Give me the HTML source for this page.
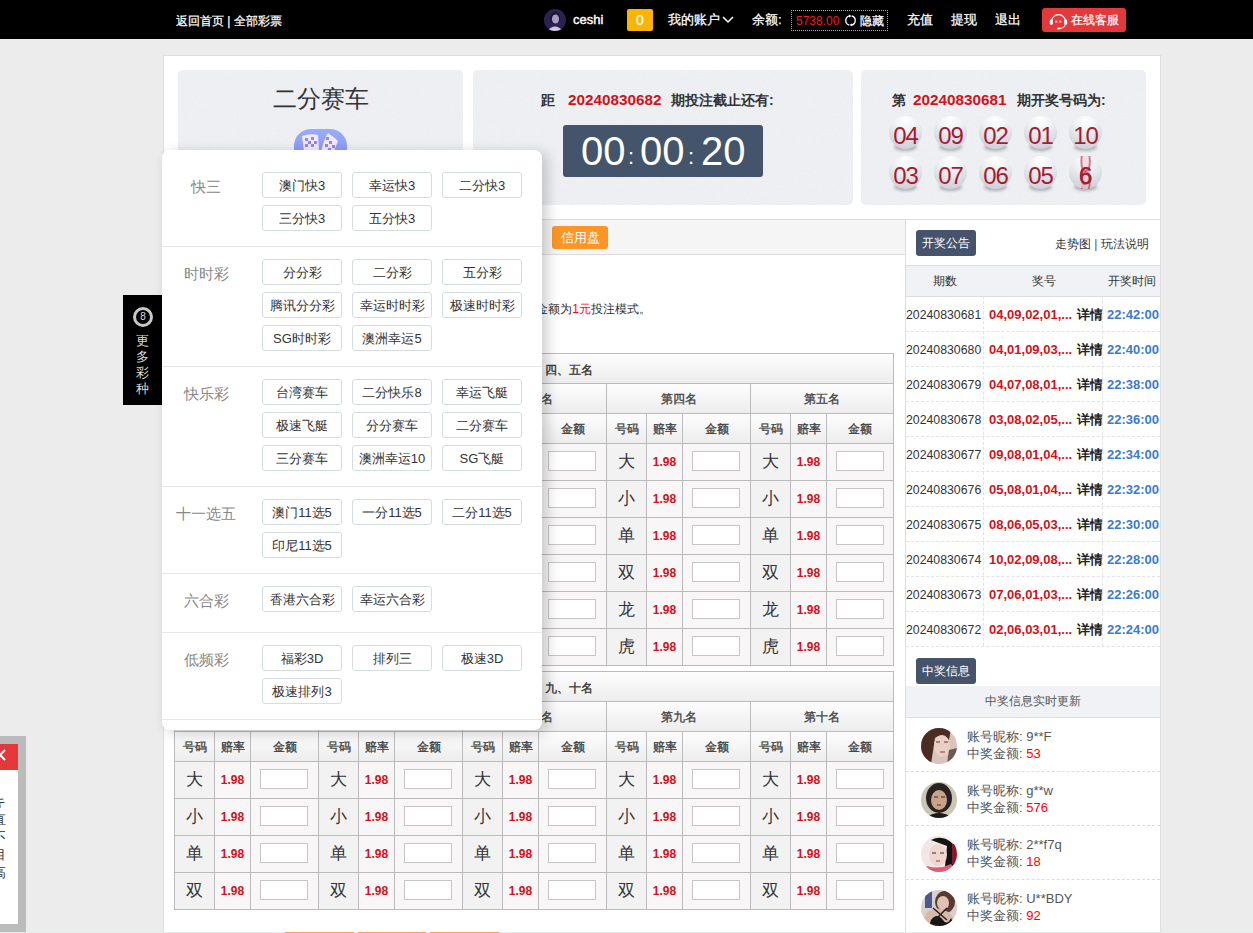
<!DOCTYPE html>
<html><head><meta charset="utf-8">
<style>
*{margin:0;padding:0;box-sizing:border-box}
html,body{width:1253px;height:933px;overflow:hidden}
body{background:#ececec;font-family:"Liberation Sans",sans-serif;font-size:13px;color:#333;position:relative}
.a{position:absolute;white-space:nowrap}
#top{position:absolute;left:0;top:0;width:1253px;height:39px;background:#000;color:#fff}
#top .a{top:11px;line-height:18px;font-size:13px;-webkit-text-stroke:0.25px #fff}
#main{position:absolute;left:163px;top:55px;width:998px;height:900px;background:#fff;border:1px solid #ddd}
.panel{position:absolute;top:70px;height:135px;background:#eceef2;border-radius:5px}
.ball{position:absolute;width:33px;height:33px;border-radius:50%;background:radial-gradient(circle at 50% 12%,#ffffff 0%,#eff0f3 35%,#d6d9e0 70%,#c9ccd5 100%);color:#a31c31;font-size:24px;line-height:40px;text-align:center;letter-spacing:-1px}
.th{background:linear-gradient(#fdfdfd,#ededed)}
.btn{position:absolute;width:80px;height:26px;border:1px solid #d5dede;border-radius:3px;text-align:center;line-height:26px;font-size:13px;color:#333;white-space:nowrap}
</style></head><body>
<div id="top">
  <div class="a" style="left:176px;top:12px;font-size:12px">返回首页 | 全部彩票</div>
  <svg class="a" style="left:544px;top:9px" width="22" height="22" viewBox="0 0 22 22"><defs><clipPath id="tav"><circle cx="11" cy="11" r="11"/></clipPath></defs><g clip-path="url(#tav)"><rect width="22" height="22" fill="#2a2350"/><ellipse cx="11" cy="9" rx="5" ry="6" fill="#1a1530"/><ellipse cx="11.5" cy="10" rx="3.6" ry="4.6" fill="#a89cc0"/><path d="M3 22 Q11 13 19 22Z" fill="#cfc6dc"/></g></svg>
  <div class="a" style="left:573px;font-size:13px;-webkit-text-stroke:0.4px #fff">ceshi</div>
  <div class="a" style="left:627px;top:9px;width:26px;height:22px;background:#fbb400;border-radius:2px;text-align:center;line-height:22px;font-size:14px">0</div>
  <div class="a" style="left:668px">我的账户</div>
  <svg class="a" style="left:722px;top:15px" width="12" height="9" viewBox="0 0 12 9"><path d="M1 2 L6 7 L11 2" stroke="#fff" stroke-width="1.5" fill="none"/></svg>
  <div class="a" style="left:752px">余额:</div>
  <div class="a" style="left:791px;top:10px;width:97px;height:21px;border:1px dotted #aaa"></div>
  <div class="a" style="left:796px;top:12px;font-size:12px;color:#f21b1b;-webkit-text-stroke:0">5738.00</div>
  <svg class="a" style="left:844px;top:14px" width="13" height="13" viewBox="0 0 13 13"><path d="M6 1.8 A4.7 4.7 0 0 0 5.2 11" stroke="#fff" stroke-width="1.3" fill="none"/><path d="M7 11.2 A4.7 4.7 0 0 0 7.8 2" stroke="#fff" stroke-width="1.3" fill="none"/><path d="M4.8 0.6 L7.6 1.9 L5.2 3.6Z" fill="#fff"/><path d="M8.2 12.4 L5.4 11.1 L7.8 9.4Z" fill="#fff"/></svg>
  <div class="a" style="left:860px;top:12px;font-size:12px">隐藏</div>
  <div class="a" style="left:907px;font-size:12.5px">充值</div>
  <div class="a" style="left:951px;font-size:12.5px">提现</div>
  <div class="a" style="left:995px;font-size:12.5px">退出</div>
  <div class="a" style="left:1042px;top:8px;width:84px;height:24px;background:#e4393c;border-radius:3px"></div>
  <svg class="a" style="left:1049px;top:11px" width="19" height="19" viewBox="0 0 19 19"><path d="M2.6 10.5 A6.9 6.9 0 0 1 16.4 10.5" stroke="#fff" stroke-width="1.2" fill="none"/><rect x="0.8" y="8.6" width="3" height="5.4" rx="1.4" fill="#fff"/><rect x="15.2" y="8.6" width="3" height="5.4" rx="1.4" fill="#fff"/><rect x="6.3" y="9.6" width="2" height="2" fill="#f6c9ca"/><rect x="10.3" y="9.6" width="2" height="2" fill="#f6c9ca"/><path d="M16.2 13.5 Q15.5 17.2 10.5 17.4" stroke="#fff" stroke-width="1.1" fill="none"/><ellipse cx="9.6" cy="17.4" rx="1.6" ry="1" fill="#fff"/></svg>
  <div class="a" style="left:1071px;font-size:12px;top:11px">在线客服</div>
</div>
<div id="main"></div>
<div class="panel" style="left:178px;width:285px"><svg width="285" height="135" style="position:absolute;left:0;top:0;border-radius:5px"><filter id="nz0"><feTurbulence type="fractalNoise" baseFrequency="0.9" numOctaves="1" seed="3"/><feColorMatrix values="0 0 0 0 0.92  0 0 0 0 0.93  0 0 0 0 0.96  0 0 0 1.6 -0.75"/></filter><rect width="285" height="135" rx="5" filter="url(#nz0)"/></svg></div>
<div class="a" style="left:178px;top:83px;width:285px;text-align:center;font-size:24px;line-height:32px;color:#333">二分赛车</div>
<div class="a" style="left:294px;top:129px;width:53px;height:50px;border-radius:17px;background:linear-gradient(#97aefc,#7f7cf2);overflow:hidden"><svg width="53" height="50" viewBox="0 0 53 50"><path d="M8 7 Q16 4 24 6 L25 22 Q17 20 10 23 Z" fill="#f6e8f8"/><path d="M27 22 Q31 8 34 4 Q40 8 44 12 Q41 20 38 26 Q33 22 27 22Z" fill="#f6e8f8"/><g fill="#8a8cf0"><rect x="11" y="9" width="3" height="3"/><rect x="17" y="8" width="3" height="3"/><rect x="14" y="12" width="3" height="3"/><rect x="20" y="12" width="3" height="3"/><rect x="11" y="15" width="3" height="3"/><rect x="17" y="15" width="3" height="3"/><rect x="32" y="8" width="3" height="3"/><rect x="35" y="12" width="3" height="3"/><rect x="31" y="15" width="3" height="3"/><rect x="38" y="16" width="3" height="3"/><rect x="34" y="19" width="3" height="3"/></g></svg></div>
<div class="panel" style="left:473px;width:380px"><svg width="380" height="135" style="position:absolute;left:0;top:0;border-radius:5px"><filter id="nz1"><feTurbulence type="fractalNoise" baseFrequency="0.9" numOctaves="1" seed="4"/><feColorMatrix values="0 0 0 0 0.92  0 0 0 0 0.93  0 0 0 0 0.96  0 0 0 1.6 -0.75"/></filter><rect width="380" height="135" rx="5" filter="url(#nz1)"/></svg></div>
<div class="a" style="left:541px;top:90px;font-size:14px;font-weight:bold;line-height:20px">距</div>
<div class="a" style="left:568px;top:90px;font-size:15.3px;font-weight:bold;line-height:20px;color:#d0121b">20240830682</div>
<div class="a" style="left:671px;top:90px;font-size:14px;font-weight:bold;line-height:20px">期投注截止还有:</div>
<div class="a" style="left:563px;top:125px;width:200px;height:52px;background:#44546a;border-radius:3px;color:#fff;font-size:40px;line-height:52px">
  <span class="a" style="left:18px;top:0">00</span><span class="a" style="left:65px;top:6px;font-size:22px">:</span>
  <span class="a" style="left:77px;top:0">00</span><span class="a" style="left:125px;top:6px;font-size:22px">:</span>
  <span class="a" style="left:138px;top:0">20</span>
</div>
<div class="panel" style="left:861px;width:285px"><svg width="285" height="135" style="position:absolute;left:0;top:0;border-radius:5px"><filter id="nz2"><feTurbulence type="fractalNoise" baseFrequency="0.9" numOctaves="1" seed="5"/><feColorMatrix values="0 0 0 0 0.92  0 0 0 0 0.93  0 0 0 0 0.96  0 0 0 1.6 -0.75"/></filter><rect width="285" height="135" rx="5" filter="url(#nz2)"/></svg></div>
<div class="a" style="left:892px;top:90px;font-size:14px;font-weight:bold;line-height:20px">第</div>
<div class="a" style="left:913px;top:90px;font-size:15.3px;font-weight:bold;line-height:20px;color:#d0121b">20240830681</div>
<div class="a" style="left:1017px;top:90px;font-size:14px;font-weight:bold;line-height:20px">期开奖号码为:</div>
<div class="a" style="left:894px;top:143px;width:23px;height:8px;border-radius:50%;background:rgba(60,60,70,.35);filter:blur(1.5px)"></div>
<div class="ball" style="left:889px;top:116px">04</div>
<div class="a" style="left:939px;top:143px;width:23px;height:8px;border-radius:50%;background:rgba(60,60,70,.35);filter:blur(1.5px)"></div>
<div class="ball" style="left:934px;top:116px">09</div>
<div class="a" style="left:984px;top:143px;width:23px;height:8px;border-radius:50%;background:rgba(60,60,70,.35);filter:blur(1.5px)"></div>
<div class="ball" style="left:979px;top:116px">02</div>
<div class="a" style="left:1029px;top:143px;width:23px;height:8px;border-radius:50%;background:rgba(60,60,70,.35);filter:blur(1.5px)"></div>
<div class="ball" style="left:1024px;top:116px">01</div>
<div class="a" style="left:1074px;top:143px;width:23px;height:8px;border-radius:50%;background:rgba(60,60,70,.35);filter:blur(1.5px)"></div>
<div class="ball" style="left:1069px;top:116px">10</div>
<div class="a" style="left:894px;top:183px;width:23px;height:8px;border-radius:50%;background:rgba(60,60,70,.35);filter:blur(1.5px)"></div>
<div class="ball" style="left:889px;top:156px">03</div>
<div class="a" style="left:939px;top:183px;width:23px;height:8px;border-radius:50%;background:rgba(60,60,70,.35);filter:blur(1.5px)"></div>
<div class="ball" style="left:934px;top:156px">07</div>
<div class="a" style="left:984px;top:183px;width:23px;height:8px;border-radius:50%;background:rgba(60,60,70,.35);filter:blur(1.5px)"></div>
<div class="ball" style="left:979px;top:156px">06</div>
<div class="a" style="left:1029px;top:183px;width:23px;height:8px;border-radius:50%;background:rgba(60,60,70,.35);filter:blur(1.5px)"></div>
<div class="ball" style="left:1024px;top:156px">05</div>
<div class="a" style="left:1074px;top:183px;width:23px;height:8px;border-radius:50%;background:rgba(60,60,70,.35);filter:blur(1.5px)"></div>
<div class="ball" style="left:1069px;top:156px">6</div>
<div class="a" style="left:1079px;top:156px;width:13px;height:33px;overflow:hidden;background:linear-gradient(90deg,transparent 2px,rgba(225,150,165,.3) 2px 11px,transparent 11px)"><div style="position:absolute;left:0;top:-14px;width:13px;color:rgba(190,30,50,.55);font-size:22px;line-height:15px;text-align:center;transform:scaleY(1.4);filter:blur(0.5px);white-space:normal">8<br>0<br>9<br>6</div></div>
<div class="a" style="left:1069px;top:156px;width:33px;color:#a31c31;font-size:24px;line-height:40px;text-align:center">6</div>
<div class="a" style="left:164px;top:219px;width:741px;height:36px;background:#f5f5f5;border-top:1px solid #ddd;border-bottom:1px solid #ddd"></div>
<div class="a" style="left:552px;top:226px;width:56px;height:23px;background:#fb9526;border-radius:3px;color:#fff;font-size:13px;line-height:23px;text-align:center">信用盘</div>
<div class="a" style="left:905px;top:219px;width:255px;height:714px;border-left:1px solid #ddd;border-top:1px solid #ddd;background:#fff"></div>
<div class="a" style="left:300px;top:300px;font-size:12px;line-height:18px;width:351px;text-align:right">单注最低金额为<span style="color:#f00">1元</span>投注模式。</div>
<div class="a" style="left:174px;top:353px;width:720px;height:312px">
<div class="a th" style="left:0;top:0;width:720px;height:31px;border:1px solid #bbb"></div>
<div class="a" style="left:171px;top:9px;width:200px;text-align:right;-webkit-text-stroke:0.35px #333;line-height:16px;font-size:12px">第一、二、三、</div>
<div class="a" style="left:371px;top:9px;-webkit-text-stroke:0.35px #333;line-height:16px;font-size:12px">四、五名</div>
<div class="a th" style="left:0px;top:30px;width:145px;height:31px;border:1px solid #bbb;text-align:center;line-height:30px;font-size:12px;-webkit-text-stroke:0.35px #444;color:#444">第一名</div>
<div class="a th" style="left:0px;top:60px;width:41px;height:31px;border:1px solid #bbb;text-align:center;line-height:31px;font-size:12px;-webkit-text-stroke:0.35px #444;color:#444">号码</div>
<div class="a th" style="left:40px;top:60px;width:37px;height:31px;border:1px solid #bbb;text-align:center;line-height:31px;font-size:12px;-webkit-text-stroke:0.35px #444;color:#444">赔率</div>
<div class="a th" style="left:76px;top:60px;width:69px;height:31px;border:1px solid #bbb;text-align:center;line-height:31px;font-size:12px;-webkit-text-stroke:0.35px #444;color:#444">金额</div>
<div class="a" style="left:0px;top:90px;width:41px;height:38px;border:1px solid #bbb;background:#f2f2f2;text-align:center;line-height:36px;font-size:17px">大</div>
<div class="a" style="left:40px;top:90px;width:37px;height:38px;border:1px solid #bbb;background:#f8f6f6;text-align:center;line-height:36px;font-size:12px;font-weight:bold;color:#d0121b">1.98</div>
<div class="a" style="left:76px;top:90px;width:69px;height:38px;border:1px solid #bbb;background:#f8f6f6"></div>
<div class="a" style="left:86px;top:98px;width:48px;height:20px;border:1px solid #c6c6c6;background:#fff"></div>
<div class="a" style="left:0px;top:127px;width:41px;height:38px;border:1px solid #bbb;background:#f2f2f2;text-align:center;line-height:36px;font-size:17px">小</div>
<div class="a" style="left:40px;top:127px;width:37px;height:38px;border:1px solid #bbb;background:#f8f6f6;text-align:center;line-height:36px;font-size:12px;font-weight:bold;color:#d0121b">1.98</div>
<div class="a" style="left:76px;top:127px;width:69px;height:38px;border:1px solid #bbb;background:#f8f6f6"></div>
<div class="a" style="left:86px;top:135px;width:48px;height:20px;border:1px solid #c6c6c6;background:#fff"></div>
<div class="a" style="left:0px;top:164px;width:41px;height:38px;border:1px solid #bbb;background:#f2f2f2;text-align:center;line-height:36px;font-size:17px">单</div>
<div class="a" style="left:40px;top:164px;width:37px;height:38px;border:1px solid #bbb;background:#f8f6f6;text-align:center;line-height:36px;font-size:12px;font-weight:bold;color:#d0121b">1.98</div>
<div class="a" style="left:76px;top:164px;width:69px;height:38px;border:1px solid #bbb;background:#f8f6f6"></div>
<div class="a" style="left:86px;top:172px;width:48px;height:20px;border:1px solid #c6c6c6;background:#fff"></div>
<div class="a" style="left:0px;top:201px;width:41px;height:38px;border:1px solid #bbb;background:#f2f2f2;text-align:center;line-height:36px;font-size:17px">双</div>
<div class="a" style="left:40px;top:201px;width:37px;height:38px;border:1px solid #bbb;background:#f8f6f6;text-align:center;line-height:36px;font-size:12px;font-weight:bold;color:#d0121b">1.98</div>
<div class="a" style="left:76px;top:201px;width:69px;height:38px;border:1px solid #bbb;background:#f8f6f6"></div>
<div class="a" style="left:86px;top:209px;width:48px;height:20px;border:1px solid #c6c6c6;background:#fff"></div>
<div class="a" style="left:0px;top:238px;width:41px;height:38px;border:1px solid #bbb;background:#f2f2f2;text-align:center;line-height:36px;font-size:17px">龙</div>
<div class="a" style="left:40px;top:238px;width:37px;height:38px;border:1px solid #bbb;background:#f8f6f6;text-align:center;line-height:36px;font-size:12px;font-weight:bold;color:#d0121b">1.98</div>
<div class="a" style="left:76px;top:238px;width:69px;height:38px;border:1px solid #bbb;background:#f8f6f6"></div>
<div class="a" style="left:86px;top:246px;width:48px;height:20px;border:1px solid #c6c6c6;background:#fff"></div>
<div class="a" style="left:0px;top:275px;width:41px;height:38px;border:1px solid #bbb;background:#f2f2f2;text-align:center;line-height:36px;font-size:17px">虎</div>
<div class="a" style="left:40px;top:275px;width:37px;height:38px;border:1px solid #bbb;background:#f8f6f6;text-align:center;line-height:36px;font-size:12px;font-weight:bold;color:#d0121b">1.98</div>
<div class="a" style="left:76px;top:275px;width:69px;height:38px;border:1px solid #bbb;background:#f8f6f6"></div>
<div class="a" style="left:86px;top:283px;width:48px;height:20px;border:1px solid #c6c6c6;background:#fff"></div>
<div class="a th" style="left:144px;top:30px;width:145px;height:31px;border:1px solid #bbb;text-align:center;line-height:30px;font-size:12px;-webkit-text-stroke:0.35px #444;color:#444">第二名</div>
<div class="a th" style="left:144px;top:60px;width:41px;height:31px;border:1px solid #bbb;text-align:center;line-height:31px;font-size:12px;-webkit-text-stroke:0.35px #444;color:#444">号码</div>
<div class="a th" style="left:184px;top:60px;width:37px;height:31px;border:1px solid #bbb;text-align:center;line-height:31px;font-size:12px;-webkit-text-stroke:0.35px #444;color:#444">赔率</div>
<div class="a th" style="left:220px;top:60px;width:69px;height:31px;border:1px solid #bbb;text-align:center;line-height:31px;font-size:12px;-webkit-text-stroke:0.35px #444;color:#444">金额</div>
<div class="a" style="left:144px;top:90px;width:41px;height:38px;border:1px solid #bbb;background:#f2f2f2;text-align:center;line-height:36px;font-size:17px">大</div>
<div class="a" style="left:184px;top:90px;width:37px;height:38px;border:1px solid #bbb;background:#f8f6f6;text-align:center;line-height:36px;font-size:12px;font-weight:bold;color:#d0121b">1.98</div>
<div class="a" style="left:220px;top:90px;width:69px;height:38px;border:1px solid #bbb;background:#f8f6f6"></div>
<div class="a" style="left:230px;top:98px;width:48px;height:20px;border:1px solid #c6c6c6;background:#fff"></div>
<div class="a" style="left:144px;top:127px;width:41px;height:38px;border:1px solid #bbb;background:#f2f2f2;text-align:center;line-height:36px;font-size:17px">小</div>
<div class="a" style="left:184px;top:127px;width:37px;height:38px;border:1px solid #bbb;background:#f8f6f6;text-align:center;line-height:36px;font-size:12px;font-weight:bold;color:#d0121b">1.98</div>
<div class="a" style="left:220px;top:127px;width:69px;height:38px;border:1px solid #bbb;background:#f8f6f6"></div>
<div class="a" style="left:230px;top:135px;width:48px;height:20px;border:1px solid #c6c6c6;background:#fff"></div>
<div class="a" style="left:144px;top:164px;width:41px;height:38px;border:1px solid #bbb;background:#f2f2f2;text-align:center;line-height:36px;font-size:17px">单</div>
<div class="a" style="left:184px;top:164px;width:37px;height:38px;border:1px solid #bbb;background:#f8f6f6;text-align:center;line-height:36px;font-size:12px;font-weight:bold;color:#d0121b">1.98</div>
<div class="a" style="left:220px;top:164px;width:69px;height:38px;border:1px solid #bbb;background:#f8f6f6"></div>
<div class="a" style="left:230px;top:172px;width:48px;height:20px;border:1px solid #c6c6c6;background:#fff"></div>
<div class="a" style="left:144px;top:201px;width:41px;height:38px;border:1px solid #bbb;background:#f2f2f2;text-align:center;line-height:36px;font-size:17px">双</div>
<div class="a" style="left:184px;top:201px;width:37px;height:38px;border:1px solid #bbb;background:#f8f6f6;text-align:center;line-height:36px;font-size:12px;font-weight:bold;color:#d0121b">1.98</div>
<div class="a" style="left:220px;top:201px;width:69px;height:38px;border:1px solid #bbb;background:#f8f6f6"></div>
<div class="a" style="left:230px;top:209px;width:48px;height:20px;border:1px solid #c6c6c6;background:#fff"></div>
<div class="a" style="left:144px;top:238px;width:41px;height:38px;border:1px solid #bbb;background:#f2f2f2;text-align:center;line-height:36px;font-size:17px">龙</div>
<div class="a" style="left:184px;top:238px;width:37px;height:38px;border:1px solid #bbb;background:#f8f6f6;text-align:center;line-height:36px;font-size:12px;font-weight:bold;color:#d0121b">1.98</div>
<div class="a" style="left:220px;top:238px;width:69px;height:38px;border:1px solid #bbb;background:#f8f6f6"></div>
<div class="a" style="left:230px;top:246px;width:48px;height:20px;border:1px solid #c6c6c6;background:#fff"></div>
<div class="a" style="left:144px;top:275px;width:41px;height:38px;border:1px solid #bbb;background:#f2f2f2;text-align:center;line-height:36px;font-size:17px">虎</div>
<div class="a" style="left:184px;top:275px;width:37px;height:38px;border:1px solid #bbb;background:#f8f6f6;text-align:center;line-height:36px;font-size:12px;font-weight:bold;color:#d0121b">1.98</div>
<div class="a" style="left:220px;top:275px;width:69px;height:38px;border:1px solid #bbb;background:#f8f6f6"></div>
<div class="a" style="left:230px;top:283px;width:48px;height:20px;border:1px solid #c6c6c6;background:#fff"></div>
<div class="a th" style="left:288px;top:30px;width:145px;height:31px;border:1px solid #bbb;text-align:center;line-height:30px;font-size:12px;-webkit-text-stroke:0.35px #444;color:#444">第三名</div>
<div class="a th" style="left:288px;top:60px;width:41px;height:31px;border:1px solid #bbb;text-align:center;line-height:31px;font-size:12px;-webkit-text-stroke:0.35px #444;color:#444">号码</div>
<div class="a th" style="left:328px;top:60px;width:37px;height:31px;border:1px solid #bbb;text-align:center;line-height:31px;font-size:12px;-webkit-text-stroke:0.35px #444;color:#444">赔率</div>
<div class="a th" style="left:364px;top:60px;width:69px;height:31px;border:1px solid #bbb;text-align:center;line-height:31px;font-size:12px;-webkit-text-stroke:0.35px #444;color:#444">金额</div>
<div class="a" style="left:288px;top:90px;width:41px;height:38px;border:1px solid #bbb;background:#f2f2f2;text-align:center;line-height:36px;font-size:17px">大</div>
<div class="a" style="left:328px;top:90px;width:37px;height:38px;border:1px solid #bbb;background:#f8f6f6;text-align:center;line-height:36px;font-size:12px;font-weight:bold;color:#d0121b">1.98</div>
<div class="a" style="left:364px;top:90px;width:69px;height:38px;border:1px solid #bbb;background:#f8f6f6"></div>
<div class="a" style="left:374px;top:98px;width:48px;height:20px;border:1px solid #c6c6c6;background:#fff"></div>
<div class="a" style="left:288px;top:127px;width:41px;height:38px;border:1px solid #bbb;background:#f2f2f2;text-align:center;line-height:36px;font-size:17px">小</div>
<div class="a" style="left:328px;top:127px;width:37px;height:38px;border:1px solid #bbb;background:#f8f6f6;text-align:center;line-height:36px;font-size:12px;font-weight:bold;color:#d0121b">1.98</div>
<div class="a" style="left:364px;top:127px;width:69px;height:38px;border:1px solid #bbb;background:#f8f6f6"></div>
<div class="a" style="left:374px;top:135px;width:48px;height:20px;border:1px solid #c6c6c6;background:#fff"></div>
<div class="a" style="left:288px;top:164px;width:41px;height:38px;border:1px solid #bbb;background:#f2f2f2;text-align:center;line-height:36px;font-size:17px">单</div>
<div class="a" style="left:328px;top:164px;width:37px;height:38px;border:1px solid #bbb;background:#f8f6f6;text-align:center;line-height:36px;font-size:12px;font-weight:bold;color:#d0121b">1.98</div>
<div class="a" style="left:364px;top:164px;width:69px;height:38px;border:1px solid #bbb;background:#f8f6f6"></div>
<div class="a" style="left:374px;top:172px;width:48px;height:20px;border:1px solid #c6c6c6;background:#fff"></div>
<div class="a" style="left:288px;top:201px;width:41px;height:38px;border:1px solid #bbb;background:#f2f2f2;text-align:center;line-height:36px;font-size:17px">双</div>
<div class="a" style="left:328px;top:201px;width:37px;height:38px;border:1px solid #bbb;background:#f8f6f6;text-align:center;line-height:36px;font-size:12px;font-weight:bold;color:#d0121b">1.98</div>
<div class="a" style="left:364px;top:201px;width:69px;height:38px;border:1px solid #bbb;background:#f8f6f6"></div>
<div class="a" style="left:374px;top:209px;width:48px;height:20px;border:1px solid #c6c6c6;background:#fff"></div>
<div class="a" style="left:288px;top:238px;width:41px;height:38px;border:1px solid #bbb;background:#f2f2f2;text-align:center;line-height:36px;font-size:17px">龙</div>
<div class="a" style="left:328px;top:238px;width:37px;height:38px;border:1px solid #bbb;background:#f8f6f6;text-align:center;line-height:36px;font-size:12px;font-weight:bold;color:#d0121b">1.98</div>
<div class="a" style="left:364px;top:238px;width:69px;height:38px;border:1px solid #bbb;background:#f8f6f6"></div>
<div class="a" style="left:374px;top:246px;width:48px;height:20px;border:1px solid #c6c6c6;background:#fff"></div>
<div class="a" style="left:288px;top:275px;width:41px;height:38px;border:1px solid #bbb;background:#f2f2f2;text-align:center;line-height:36px;font-size:17px">虎</div>
<div class="a" style="left:328px;top:275px;width:37px;height:38px;border:1px solid #bbb;background:#f8f6f6;text-align:center;line-height:36px;font-size:12px;font-weight:bold;color:#d0121b">1.98</div>
<div class="a" style="left:364px;top:275px;width:69px;height:38px;border:1px solid #bbb;background:#f8f6f6"></div>
<div class="a" style="left:374px;top:283px;width:48px;height:20px;border:1px solid #c6c6c6;background:#fff"></div>
<div class="a th" style="left:432px;top:30px;width:145px;height:31px;border:1px solid #bbb;text-align:center;line-height:30px;font-size:12px;-webkit-text-stroke:0.35px #444;color:#444">第四名</div>
<div class="a th" style="left:432px;top:60px;width:41px;height:31px;border:1px solid #bbb;text-align:center;line-height:31px;font-size:12px;-webkit-text-stroke:0.35px #444;color:#444">号码</div>
<div class="a th" style="left:472px;top:60px;width:37px;height:31px;border:1px solid #bbb;text-align:center;line-height:31px;font-size:12px;-webkit-text-stroke:0.35px #444;color:#444">赔率</div>
<div class="a th" style="left:508px;top:60px;width:69px;height:31px;border:1px solid #bbb;text-align:center;line-height:31px;font-size:12px;-webkit-text-stroke:0.35px #444;color:#444">金额</div>
<div class="a" style="left:432px;top:90px;width:41px;height:38px;border:1px solid #bbb;background:#f2f2f2;text-align:center;line-height:36px;font-size:17px">大</div>
<div class="a" style="left:472px;top:90px;width:37px;height:38px;border:1px solid #bbb;background:#f8f6f6;text-align:center;line-height:36px;font-size:12px;font-weight:bold;color:#d0121b">1.98</div>
<div class="a" style="left:508px;top:90px;width:69px;height:38px;border:1px solid #bbb;background:#f8f6f6"></div>
<div class="a" style="left:518px;top:98px;width:48px;height:20px;border:1px solid #c6c6c6;background:#fff"></div>
<div class="a" style="left:432px;top:127px;width:41px;height:38px;border:1px solid #bbb;background:#f2f2f2;text-align:center;line-height:36px;font-size:17px">小</div>
<div class="a" style="left:472px;top:127px;width:37px;height:38px;border:1px solid #bbb;background:#f8f6f6;text-align:center;line-height:36px;font-size:12px;font-weight:bold;color:#d0121b">1.98</div>
<div class="a" style="left:508px;top:127px;width:69px;height:38px;border:1px solid #bbb;background:#f8f6f6"></div>
<div class="a" style="left:518px;top:135px;width:48px;height:20px;border:1px solid #c6c6c6;background:#fff"></div>
<div class="a" style="left:432px;top:164px;width:41px;height:38px;border:1px solid #bbb;background:#f2f2f2;text-align:center;line-height:36px;font-size:17px">单</div>
<div class="a" style="left:472px;top:164px;width:37px;height:38px;border:1px solid #bbb;background:#f8f6f6;text-align:center;line-height:36px;font-size:12px;font-weight:bold;color:#d0121b">1.98</div>
<div class="a" style="left:508px;top:164px;width:69px;height:38px;border:1px solid #bbb;background:#f8f6f6"></div>
<div class="a" style="left:518px;top:172px;width:48px;height:20px;border:1px solid #c6c6c6;background:#fff"></div>
<div class="a" style="left:432px;top:201px;width:41px;height:38px;border:1px solid #bbb;background:#f2f2f2;text-align:center;line-height:36px;font-size:17px">双</div>
<div class="a" style="left:472px;top:201px;width:37px;height:38px;border:1px solid #bbb;background:#f8f6f6;text-align:center;line-height:36px;font-size:12px;font-weight:bold;color:#d0121b">1.98</div>
<div class="a" style="left:508px;top:201px;width:69px;height:38px;border:1px solid #bbb;background:#f8f6f6"></div>
<div class="a" style="left:518px;top:209px;width:48px;height:20px;border:1px solid #c6c6c6;background:#fff"></div>
<div class="a" style="left:432px;top:238px;width:41px;height:38px;border:1px solid #bbb;background:#f2f2f2;text-align:center;line-height:36px;font-size:17px">龙</div>
<div class="a" style="left:472px;top:238px;width:37px;height:38px;border:1px solid #bbb;background:#f8f6f6;text-align:center;line-height:36px;font-size:12px;font-weight:bold;color:#d0121b">1.98</div>
<div class="a" style="left:508px;top:238px;width:69px;height:38px;border:1px solid #bbb;background:#f8f6f6"></div>
<div class="a" style="left:518px;top:246px;width:48px;height:20px;border:1px solid #c6c6c6;background:#fff"></div>
<div class="a" style="left:432px;top:275px;width:41px;height:38px;border:1px solid #bbb;background:#f2f2f2;text-align:center;line-height:36px;font-size:17px">虎</div>
<div class="a" style="left:472px;top:275px;width:37px;height:38px;border:1px solid #bbb;background:#f8f6f6;text-align:center;line-height:36px;font-size:12px;font-weight:bold;color:#d0121b">1.98</div>
<div class="a" style="left:508px;top:275px;width:69px;height:38px;border:1px solid #bbb;background:#f8f6f6"></div>
<div class="a" style="left:518px;top:283px;width:48px;height:20px;border:1px solid #c6c6c6;background:#fff"></div>
<div class="a th" style="left:576px;top:30px;width:144px;height:31px;border:1px solid #bbb;text-align:center;line-height:30px;font-size:12px;-webkit-text-stroke:0.35px #444;color:#444">第五名</div>
<div class="a th" style="left:576px;top:60px;width:41px;height:31px;border:1px solid #bbb;text-align:center;line-height:31px;font-size:12px;-webkit-text-stroke:0.35px #444;color:#444">号码</div>
<div class="a th" style="left:616px;top:60px;width:37px;height:31px;border:1px solid #bbb;text-align:center;line-height:31px;font-size:12px;-webkit-text-stroke:0.35px #444;color:#444">赔率</div>
<div class="a th" style="left:652px;top:60px;width:68px;height:31px;border:1px solid #bbb;text-align:center;line-height:31px;font-size:12px;-webkit-text-stroke:0.35px #444;color:#444">金额</div>
<div class="a" style="left:576px;top:90px;width:41px;height:38px;border:1px solid #bbb;background:#f2f2f2;text-align:center;line-height:36px;font-size:17px">大</div>
<div class="a" style="left:616px;top:90px;width:37px;height:38px;border:1px solid #bbb;background:#f8f6f6;text-align:center;line-height:36px;font-size:12px;font-weight:bold;color:#d0121b">1.98</div>
<div class="a" style="left:652px;top:90px;width:68px;height:38px;border:1px solid #bbb;background:#f8f6f6"></div>
<div class="a" style="left:662px;top:98px;width:48px;height:20px;border:1px solid #c6c6c6;background:#fff"></div>
<div class="a" style="left:576px;top:127px;width:41px;height:38px;border:1px solid #bbb;background:#f2f2f2;text-align:center;line-height:36px;font-size:17px">小</div>
<div class="a" style="left:616px;top:127px;width:37px;height:38px;border:1px solid #bbb;background:#f8f6f6;text-align:center;line-height:36px;font-size:12px;font-weight:bold;color:#d0121b">1.98</div>
<div class="a" style="left:652px;top:127px;width:68px;height:38px;border:1px solid #bbb;background:#f8f6f6"></div>
<div class="a" style="left:662px;top:135px;width:48px;height:20px;border:1px solid #c6c6c6;background:#fff"></div>
<div class="a" style="left:576px;top:164px;width:41px;height:38px;border:1px solid #bbb;background:#f2f2f2;text-align:center;line-height:36px;font-size:17px">单</div>
<div class="a" style="left:616px;top:164px;width:37px;height:38px;border:1px solid #bbb;background:#f8f6f6;text-align:center;line-height:36px;font-size:12px;font-weight:bold;color:#d0121b">1.98</div>
<div class="a" style="left:652px;top:164px;width:68px;height:38px;border:1px solid #bbb;background:#f8f6f6"></div>
<div class="a" style="left:662px;top:172px;width:48px;height:20px;border:1px solid #c6c6c6;background:#fff"></div>
<div class="a" style="left:576px;top:201px;width:41px;height:38px;border:1px solid #bbb;background:#f2f2f2;text-align:center;line-height:36px;font-size:17px">双</div>
<div class="a" style="left:616px;top:201px;width:37px;height:38px;border:1px solid #bbb;background:#f8f6f6;text-align:center;line-height:36px;font-size:12px;font-weight:bold;color:#d0121b">1.98</div>
<div class="a" style="left:652px;top:201px;width:68px;height:38px;border:1px solid #bbb;background:#f8f6f6"></div>
<div class="a" style="left:662px;top:209px;width:48px;height:20px;border:1px solid #c6c6c6;background:#fff"></div>
<div class="a" style="left:576px;top:238px;width:41px;height:38px;border:1px solid #bbb;background:#f2f2f2;text-align:center;line-height:36px;font-size:17px">龙</div>
<div class="a" style="left:616px;top:238px;width:37px;height:38px;border:1px solid #bbb;background:#f8f6f6;text-align:center;line-height:36px;font-size:12px;font-weight:bold;color:#d0121b">1.98</div>
<div class="a" style="left:652px;top:238px;width:68px;height:38px;border:1px solid #bbb;background:#f8f6f6"></div>
<div class="a" style="left:662px;top:246px;width:48px;height:20px;border:1px solid #c6c6c6;background:#fff"></div>
<div class="a" style="left:576px;top:275px;width:41px;height:38px;border:1px solid #bbb;background:#f2f2f2;text-align:center;line-height:36px;font-size:17px">虎</div>
<div class="a" style="left:616px;top:275px;width:37px;height:38px;border:1px solid #bbb;background:#f8f6f6;text-align:center;line-height:36px;font-size:12px;font-weight:bold;color:#d0121b">1.98</div>
<div class="a" style="left:652px;top:275px;width:68px;height:38px;border:1px solid #bbb;background:#f8f6f6"></div>
<div class="a" style="left:662px;top:283px;width:48px;height:20px;border:1px solid #c6c6c6;background:#fff"></div>
</div>
<div class="a" style="left:174px;top:671px;width:720px;height:238px">
<div class="a th" style="left:0;top:0;width:720px;height:31px;border:1px solid #bbb"></div>
<div class="a" style="left:171px;top:9px;width:200px;text-align:right;-webkit-text-stroke:0.35px #333;line-height:16px;font-size:12px">第六、七、八、</div>
<div class="a" style="left:371px;top:9px;-webkit-text-stroke:0.35px #333;line-height:16px;font-size:12px">九、十名</div>
<div class="a th" style="left:0px;top:30px;width:145px;height:31px;border:1px solid #bbb;text-align:center;line-height:30px;font-size:12px;-webkit-text-stroke:0.35px #444;color:#444">第六名</div>
<div class="a th" style="left:0px;top:60px;width:41px;height:31px;border:1px solid #bbb;text-align:center;line-height:31px;font-size:12px;-webkit-text-stroke:0.35px #444;color:#444">号码</div>
<div class="a th" style="left:40px;top:60px;width:37px;height:31px;border:1px solid #bbb;text-align:center;line-height:31px;font-size:12px;-webkit-text-stroke:0.35px #444;color:#444">赔率</div>
<div class="a th" style="left:76px;top:60px;width:69px;height:31px;border:1px solid #bbb;text-align:center;line-height:31px;font-size:12px;-webkit-text-stroke:0.35px #444;color:#444">金额</div>
<div class="a" style="left:0px;top:90px;width:41px;height:38px;border:1px solid #bbb;background:#f2f2f2;text-align:center;line-height:36px;font-size:17px">大</div>
<div class="a" style="left:40px;top:90px;width:37px;height:38px;border:1px solid #bbb;background:#f8f6f6;text-align:center;line-height:36px;font-size:12px;font-weight:bold;color:#d0121b">1.98</div>
<div class="a" style="left:76px;top:90px;width:69px;height:38px;border:1px solid #bbb;background:#f8f6f6"></div>
<div class="a" style="left:86px;top:98px;width:48px;height:20px;border:1px solid #c6c6c6;background:#fff"></div>
<div class="a" style="left:0px;top:127px;width:41px;height:38px;border:1px solid #bbb;background:#f2f2f2;text-align:center;line-height:36px;font-size:17px">小</div>
<div class="a" style="left:40px;top:127px;width:37px;height:38px;border:1px solid #bbb;background:#f8f6f6;text-align:center;line-height:36px;font-size:12px;font-weight:bold;color:#d0121b">1.98</div>
<div class="a" style="left:76px;top:127px;width:69px;height:38px;border:1px solid #bbb;background:#f8f6f6"></div>
<div class="a" style="left:86px;top:135px;width:48px;height:20px;border:1px solid #c6c6c6;background:#fff"></div>
<div class="a" style="left:0px;top:164px;width:41px;height:38px;border:1px solid #bbb;background:#f2f2f2;text-align:center;line-height:36px;font-size:17px">单</div>
<div class="a" style="left:40px;top:164px;width:37px;height:38px;border:1px solid #bbb;background:#f8f6f6;text-align:center;line-height:36px;font-size:12px;font-weight:bold;color:#d0121b">1.98</div>
<div class="a" style="left:76px;top:164px;width:69px;height:38px;border:1px solid #bbb;background:#f8f6f6"></div>
<div class="a" style="left:86px;top:172px;width:48px;height:20px;border:1px solid #c6c6c6;background:#fff"></div>
<div class="a" style="left:0px;top:201px;width:41px;height:38px;border:1px solid #bbb;background:#f2f2f2;text-align:center;line-height:36px;font-size:17px">双</div>
<div class="a" style="left:40px;top:201px;width:37px;height:38px;border:1px solid #bbb;background:#f8f6f6;text-align:center;line-height:36px;font-size:12px;font-weight:bold;color:#d0121b">1.98</div>
<div class="a" style="left:76px;top:201px;width:69px;height:38px;border:1px solid #bbb;background:#f8f6f6"></div>
<div class="a" style="left:86px;top:209px;width:48px;height:20px;border:1px solid #c6c6c6;background:#fff"></div>
<div class="a th" style="left:144px;top:30px;width:145px;height:31px;border:1px solid #bbb;text-align:center;line-height:30px;font-size:12px;-webkit-text-stroke:0.35px #444;color:#444">第七名</div>
<div class="a th" style="left:144px;top:60px;width:41px;height:31px;border:1px solid #bbb;text-align:center;line-height:31px;font-size:12px;-webkit-text-stroke:0.35px #444;color:#444">号码</div>
<div class="a th" style="left:184px;top:60px;width:37px;height:31px;border:1px solid #bbb;text-align:center;line-height:31px;font-size:12px;-webkit-text-stroke:0.35px #444;color:#444">赔率</div>
<div class="a th" style="left:220px;top:60px;width:69px;height:31px;border:1px solid #bbb;text-align:center;line-height:31px;font-size:12px;-webkit-text-stroke:0.35px #444;color:#444">金额</div>
<div class="a" style="left:144px;top:90px;width:41px;height:38px;border:1px solid #bbb;background:#f2f2f2;text-align:center;line-height:36px;font-size:17px">大</div>
<div class="a" style="left:184px;top:90px;width:37px;height:38px;border:1px solid #bbb;background:#f8f6f6;text-align:center;line-height:36px;font-size:12px;font-weight:bold;color:#d0121b">1.98</div>
<div class="a" style="left:220px;top:90px;width:69px;height:38px;border:1px solid #bbb;background:#f8f6f6"></div>
<div class="a" style="left:230px;top:98px;width:48px;height:20px;border:1px solid #c6c6c6;background:#fff"></div>
<div class="a" style="left:144px;top:127px;width:41px;height:38px;border:1px solid #bbb;background:#f2f2f2;text-align:center;line-height:36px;font-size:17px">小</div>
<div class="a" style="left:184px;top:127px;width:37px;height:38px;border:1px solid #bbb;background:#f8f6f6;text-align:center;line-height:36px;font-size:12px;font-weight:bold;color:#d0121b">1.98</div>
<div class="a" style="left:220px;top:127px;width:69px;height:38px;border:1px solid #bbb;background:#f8f6f6"></div>
<div class="a" style="left:230px;top:135px;width:48px;height:20px;border:1px solid #c6c6c6;background:#fff"></div>
<div class="a" style="left:144px;top:164px;width:41px;height:38px;border:1px solid #bbb;background:#f2f2f2;text-align:center;line-height:36px;font-size:17px">单</div>
<div class="a" style="left:184px;top:164px;width:37px;height:38px;border:1px solid #bbb;background:#f8f6f6;text-align:center;line-height:36px;font-size:12px;font-weight:bold;color:#d0121b">1.98</div>
<div class="a" style="left:220px;top:164px;width:69px;height:38px;border:1px solid #bbb;background:#f8f6f6"></div>
<div class="a" style="left:230px;top:172px;width:48px;height:20px;border:1px solid #c6c6c6;background:#fff"></div>
<div class="a" style="left:144px;top:201px;width:41px;height:38px;border:1px solid #bbb;background:#f2f2f2;text-align:center;line-height:36px;font-size:17px">双</div>
<div class="a" style="left:184px;top:201px;width:37px;height:38px;border:1px solid #bbb;background:#f8f6f6;text-align:center;line-height:36px;font-size:12px;font-weight:bold;color:#d0121b">1.98</div>
<div class="a" style="left:220px;top:201px;width:69px;height:38px;border:1px solid #bbb;background:#f8f6f6"></div>
<div class="a" style="left:230px;top:209px;width:48px;height:20px;border:1px solid #c6c6c6;background:#fff"></div>
<div class="a th" style="left:288px;top:30px;width:145px;height:31px;border:1px solid #bbb;text-align:center;line-height:30px;font-size:12px;-webkit-text-stroke:0.35px #444;color:#444">第八名</div>
<div class="a th" style="left:288px;top:60px;width:41px;height:31px;border:1px solid #bbb;text-align:center;line-height:31px;font-size:12px;-webkit-text-stroke:0.35px #444;color:#444">号码</div>
<div class="a th" style="left:328px;top:60px;width:37px;height:31px;border:1px solid #bbb;text-align:center;line-height:31px;font-size:12px;-webkit-text-stroke:0.35px #444;color:#444">赔率</div>
<div class="a th" style="left:364px;top:60px;width:69px;height:31px;border:1px solid #bbb;text-align:center;line-height:31px;font-size:12px;-webkit-text-stroke:0.35px #444;color:#444">金额</div>
<div class="a" style="left:288px;top:90px;width:41px;height:38px;border:1px solid #bbb;background:#f2f2f2;text-align:center;line-height:36px;font-size:17px">大</div>
<div class="a" style="left:328px;top:90px;width:37px;height:38px;border:1px solid #bbb;background:#f8f6f6;text-align:center;line-height:36px;font-size:12px;font-weight:bold;color:#d0121b">1.98</div>
<div class="a" style="left:364px;top:90px;width:69px;height:38px;border:1px solid #bbb;background:#f8f6f6"></div>
<div class="a" style="left:374px;top:98px;width:48px;height:20px;border:1px solid #c6c6c6;background:#fff"></div>
<div class="a" style="left:288px;top:127px;width:41px;height:38px;border:1px solid #bbb;background:#f2f2f2;text-align:center;line-height:36px;font-size:17px">小</div>
<div class="a" style="left:328px;top:127px;width:37px;height:38px;border:1px solid #bbb;background:#f8f6f6;text-align:center;line-height:36px;font-size:12px;font-weight:bold;color:#d0121b">1.98</div>
<div class="a" style="left:364px;top:127px;width:69px;height:38px;border:1px solid #bbb;background:#f8f6f6"></div>
<div class="a" style="left:374px;top:135px;width:48px;height:20px;border:1px solid #c6c6c6;background:#fff"></div>
<div class="a" style="left:288px;top:164px;width:41px;height:38px;border:1px solid #bbb;background:#f2f2f2;text-align:center;line-height:36px;font-size:17px">单</div>
<div class="a" style="left:328px;top:164px;width:37px;height:38px;border:1px solid #bbb;background:#f8f6f6;text-align:center;line-height:36px;font-size:12px;font-weight:bold;color:#d0121b">1.98</div>
<div class="a" style="left:364px;top:164px;width:69px;height:38px;border:1px solid #bbb;background:#f8f6f6"></div>
<div class="a" style="left:374px;top:172px;width:48px;height:20px;border:1px solid #c6c6c6;background:#fff"></div>
<div class="a" style="left:288px;top:201px;width:41px;height:38px;border:1px solid #bbb;background:#f2f2f2;text-align:center;line-height:36px;font-size:17px">双</div>
<div class="a" style="left:328px;top:201px;width:37px;height:38px;border:1px solid #bbb;background:#f8f6f6;text-align:center;line-height:36px;font-size:12px;font-weight:bold;color:#d0121b">1.98</div>
<div class="a" style="left:364px;top:201px;width:69px;height:38px;border:1px solid #bbb;background:#f8f6f6"></div>
<div class="a" style="left:374px;top:209px;width:48px;height:20px;border:1px solid #c6c6c6;background:#fff"></div>
<div class="a th" style="left:432px;top:30px;width:145px;height:31px;border:1px solid #bbb;text-align:center;line-height:30px;font-size:12px;-webkit-text-stroke:0.35px #444;color:#444">第九名</div>
<div class="a th" style="left:432px;top:60px;width:41px;height:31px;border:1px solid #bbb;text-align:center;line-height:31px;font-size:12px;-webkit-text-stroke:0.35px #444;color:#444">号码</div>
<div class="a th" style="left:472px;top:60px;width:37px;height:31px;border:1px solid #bbb;text-align:center;line-height:31px;font-size:12px;-webkit-text-stroke:0.35px #444;color:#444">赔率</div>
<div class="a th" style="left:508px;top:60px;width:69px;height:31px;border:1px solid #bbb;text-align:center;line-height:31px;font-size:12px;-webkit-text-stroke:0.35px #444;color:#444">金额</div>
<div class="a" style="left:432px;top:90px;width:41px;height:38px;border:1px solid #bbb;background:#f2f2f2;text-align:center;line-height:36px;font-size:17px">大</div>
<div class="a" style="left:472px;top:90px;width:37px;height:38px;border:1px solid #bbb;background:#f8f6f6;text-align:center;line-height:36px;font-size:12px;font-weight:bold;color:#d0121b">1.98</div>
<div class="a" style="left:508px;top:90px;width:69px;height:38px;border:1px solid #bbb;background:#f8f6f6"></div>
<div class="a" style="left:518px;top:98px;width:48px;height:20px;border:1px solid #c6c6c6;background:#fff"></div>
<div class="a" style="left:432px;top:127px;width:41px;height:38px;border:1px solid #bbb;background:#f2f2f2;text-align:center;line-height:36px;font-size:17px">小</div>
<div class="a" style="left:472px;top:127px;width:37px;height:38px;border:1px solid #bbb;background:#f8f6f6;text-align:center;line-height:36px;font-size:12px;font-weight:bold;color:#d0121b">1.98</div>
<div class="a" style="left:508px;top:127px;width:69px;height:38px;border:1px solid #bbb;background:#f8f6f6"></div>
<div class="a" style="left:518px;top:135px;width:48px;height:20px;border:1px solid #c6c6c6;background:#fff"></div>
<div class="a" style="left:432px;top:164px;width:41px;height:38px;border:1px solid #bbb;background:#f2f2f2;text-align:center;line-height:36px;font-size:17px">单</div>
<div class="a" style="left:472px;top:164px;width:37px;height:38px;border:1px solid #bbb;background:#f8f6f6;text-align:center;line-height:36px;font-size:12px;font-weight:bold;color:#d0121b">1.98</div>
<div class="a" style="left:508px;top:164px;width:69px;height:38px;border:1px solid #bbb;background:#f8f6f6"></div>
<div class="a" style="left:518px;top:172px;width:48px;height:20px;border:1px solid #c6c6c6;background:#fff"></div>
<div class="a" style="left:432px;top:201px;width:41px;height:38px;border:1px solid #bbb;background:#f2f2f2;text-align:center;line-height:36px;font-size:17px">双</div>
<div class="a" style="left:472px;top:201px;width:37px;height:38px;border:1px solid #bbb;background:#f8f6f6;text-align:center;line-height:36px;font-size:12px;font-weight:bold;color:#d0121b">1.98</div>
<div class="a" style="left:508px;top:201px;width:69px;height:38px;border:1px solid #bbb;background:#f8f6f6"></div>
<div class="a" style="left:518px;top:209px;width:48px;height:20px;border:1px solid #c6c6c6;background:#fff"></div>
<div class="a th" style="left:576px;top:30px;width:144px;height:31px;border:1px solid #bbb;text-align:center;line-height:30px;font-size:12px;-webkit-text-stroke:0.35px #444;color:#444">第十名</div>
<div class="a th" style="left:576px;top:60px;width:41px;height:31px;border:1px solid #bbb;text-align:center;line-height:31px;font-size:12px;-webkit-text-stroke:0.35px #444;color:#444">号码</div>
<div class="a th" style="left:616px;top:60px;width:37px;height:31px;border:1px solid #bbb;text-align:center;line-height:31px;font-size:12px;-webkit-text-stroke:0.35px #444;color:#444">赔率</div>
<div class="a th" style="left:652px;top:60px;width:68px;height:31px;border:1px solid #bbb;text-align:center;line-height:31px;font-size:12px;-webkit-text-stroke:0.35px #444;color:#444">金额</div>
<div class="a" style="left:576px;top:90px;width:41px;height:38px;border:1px solid #bbb;background:#f2f2f2;text-align:center;line-height:36px;font-size:17px">大</div>
<div class="a" style="left:616px;top:90px;width:37px;height:38px;border:1px solid #bbb;background:#f8f6f6;text-align:center;line-height:36px;font-size:12px;font-weight:bold;color:#d0121b">1.98</div>
<div class="a" style="left:652px;top:90px;width:68px;height:38px;border:1px solid #bbb;background:#f8f6f6"></div>
<div class="a" style="left:662px;top:98px;width:48px;height:20px;border:1px solid #c6c6c6;background:#fff"></div>
<div class="a" style="left:576px;top:127px;width:41px;height:38px;border:1px solid #bbb;background:#f2f2f2;text-align:center;line-height:36px;font-size:17px">小</div>
<div class="a" style="left:616px;top:127px;width:37px;height:38px;border:1px solid #bbb;background:#f8f6f6;text-align:center;line-height:36px;font-size:12px;font-weight:bold;color:#d0121b">1.98</div>
<div class="a" style="left:652px;top:127px;width:68px;height:38px;border:1px solid #bbb;background:#f8f6f6"></div>
<div class="a" style="left:662px;top:135px;width:48px;height:20px;border:1px solid #c6c6c6;background:#fff"></div>
<div class="a" style="left:576px;top:164px;width:41px;height:38px;border:1px solid #bbb;background:#f2f2f2;text-align:center;line-height:36px;font-size:17px">单</div>
<div class="a" style="left:616px;top:164px;width:37px;height:38px;border:1px solid #bbb;background:#f8f6f6;text-align:center;line-height:36px;font-size:12px;font-weight:bold;color:#d0121b">1.98</div>
<div class="a" style="left:652px;top:164px;width:68px;height:38px;border:1px solid #bbb;background:#f8f6f6"></div>
<div class="a" style="left:662px;top:172px;width:48px;height:20px;border:1px solid #c6c6c6;background:#fff"></div>
<div class="a" style="left:576px;top:201px;width:41px;height:38px;border:1px solid #bbb;background:#f2f2f2;text-align:center;line-height:36px;font-size:17px">双</div>
<div class="a" style="left:616px;top:201px;width:37px;height:38px;border:1px solid #bbb;background:#f8f6f6;text-align:center;line-height:36px;font-size:12px;font-weight:bold;color:#d0121b">1.98</div>
<div class="a" style="left:652px;top:201px;width:68px;height:38px;border:1px solid #bbb;background:#f8f6f6"></div>
<div class="a" style="left:662px;top:209px;width:48px;height:20px;border:1px solid #c6c6c6;background:#fff"></div>
</div>
<div class="a" style="left:916px;top:230px;width:60px;height:26px;background:#45546a;border-radius:3px;color:#fff;font-size:12px;line-height:26px;text-align:center">开奖公告</div>
<div class="a" style="left:1055px;top:236px;font-size:12px;line-height:16px">走势图 <span style="color:#555">|</span> 玩法说明</div>
<div class="a" style="left:906px;top:265px;width:254px;height:32px;background:#f0f2f5;border-top:1px solid #ddd;border-bottom:1px solid #ddd"></div>
<div class="a" style="left:906px;top:273px;width:78px;text-align:center;line-height:16px;font-size:12px">期数</div>
<div class="a" style="left:984px;top:273px;width:119px;text-align:center;line-height:16px;font-size:12px">奖号</div>
<div class="a" style="left:1103px;top:273px;width:57px;text-align:center;line-height:16px;font-size:12px">开奖时间</div>
<div class="a" style="left:906px;top:296px;width:254px;height:36px;border-bottom:1px dashed #e3e3e3"></div>
<div class="a" style="left:906px;top:307px;line-height:16px;font-size:12.3px;color:#333">20240830681</div>
<div class="a" style="left:989px;top:307px;line-height:16px;font-size:13px;font-weight:bold;color:#d0121b">04,09,02,01,...</div>
<div class="a" style="left:1077px;top:307px;line-height:16px;font-size:13px;font-weight:bold;color:#222">详情</div>
<div class="a" style="left:1107px;top:307px;line-height:16px;font-size:13px;font-weight:bold;color:#3c7cc8">22:42:00</div>
<div class="a" style="left:906px;top:331px;width:254px;height:36px;border-bottom:1px dashed #e3e3e3"></div>
<div class="a" style="left:906px;top:342px;line-height:16px;font-size:12.3px;color:#333">20240830680</div>
<div class="a" style="left:989px;top:342px;line-height:16px;font-size:13px;font-weight:bold;color:#d0121b">04,01,09,03,...</div>
<div class="a" style="left:1077px;top:342px;line-height:16px;font-size:13px;font-weight:bold;color:#222">详情</div>
<div class="a" style="left:1107px;top:342px;line-height:16px;font-size:13px;font-weight:bold;color:#3c7cc8">22:40:00</div>
<div class="a" style="left:906px;top:366px;width:254px;height:36px;border-bottom:1px dashed #e3e3e3"></div>
<div class="a" style="left:906px;top:377px;line-height:16px;font-size:12.3px;color:#333">20240830679</div>
<div class="a" style="left:989px;top:377px;line-height:16px;font-size:13px;font-weight:bold;color:#d0121b">04,07,08,01,...</div>
<div class="a" style="left:1077px;top:377px;line-height:16px;font-size:13px;font-weight:bold;color:#222">详情</div>
<div class="a" style="left:1107px;top:377px;line-height:16px;font-size:13px;font-weight:bold;color:#3c7cc8">22:38:00</div>
<div class="a" style="left:906px;top:401px;width:254px;height:36px;border-bottom:1px dashed #e3e3e3"></div>
<div class="a" style="left:906px;top:412px;line-height:16px;font-size:12.3px;color:#333">20240830678</div>
<div class="a" style="left:989px;top:412px;line-height:16px;font-size:13px;font-weight:bold;color:#d0121b">03,08,02,05,...</div>
<div class="a" style="left:1077px;top:412px;line-height:16px;font-size:13px;font-weight:bold;color:#222">详情</div>
<div class="a" style="left:1107px;top:412px;line-height:16px;font-size:13px;font-weight:bold;color:#3c7cc8">22:36:00</div>
<div class="a" style="left:906px;top:436px;width:254px;height:36px;border-bottom:1px dashed #e3e3e3"></div>
<div class="a" style="left:906px;top:447px;line-height:16px;font-size:12.3px;color:#333">20240830677</div>
<div class="a" style="left:989px;top:447px;line-height:16px;font-size:13px;font-weight:bold;color:#d0121b">09,08,01,04,...</div>
<div class="a" style="left:1077px;top:447px;line-height:16px;font-size:13px;font-weight:bold;color:#222">详情</div>
<div class="a" style="left:1107px;top:447px;line-height:16px;font-size:13px;font-weight:bold;color:#3c7cc8">22:34:00</div>
<div class="a" style="left:906px;top:471px;width:254px;height:36px;border-bottom:1px dashed #e3e3e3"></div>
<div class="a" style="left:906px;top:482px;line-height:16px;font-size:12.3px;color:#333">20240830676</div>
<div class="a" style="left:989px;top:482px;line-height:16px;font-size:13px;font-weight:bold;color:#d0121b">05,08,01,04,...</div>
<div class="a" style="left:1077px;top:482px;line-height:16px;font-size:13px;font-weight:bold;color:#222">详情</div>
<div class="a" style="left:1107px;top:482px;line-height:16px;font-size:13px;font-weight:bold;color:#3c7cc8">22:32:00</div>
<div class="a" style="left:906px;top:506px;width:254px;height:36px;border-bottom:1px dashed #e3e3e3"></div>
<div class="a" style="left:906px;top:517px;line-height:16px;font-size:12.3px;color:#333">20240830675</div>
<div class="a" style="left:989px;top:517px;line-height:16px;font-size:13px;font-weight:bold;color:#d0121b">08,06,05,03,...</div>
<div class="a" style="left:1077px;top:517px;line-height:16px;font-size:13px;font-weight:bold;color:#222">详情</div>
<div class="a" style="left:1107px;top:517px;line-height:16px;font-size:13px;font-weight:bold;color:#3c7cc8">22:30:00</div>
<div class="a" style="left:906px;top:541px;width:254px;height:36px;border-bottom:1px dashed #e3e3e3"></div>
<div class="a" style="left:906px;top:552px;line-height:16px;font-size:12.3px;color:#333">20240830674</div>
<div class="a" style="left:989px;top:552px;line-height:16px;font-size:13px;font-weight:bold;color:#d0121b">10,02,09,08,...</div>
<div class="a" style="left:1077px;top:552px;line-height:16px;font-size:13px;font-weight:bold;color:#222">详情</div>
<div class="a" style="left:1107px;top:552px;line-height:16px;font-size:13px;font-weight:bold;color:#3c7cc8">22:28:00</div>
<div class="a" style="left:906px;top:576px;width:254px;height:36px;border-bottom:1px dashed #e3e3e3"></div>
<div class="a" style="left:906px;top:587px;line-height:16px;font-size:12.3px;color:#333">20240830673</div>
<div class="a" style="left:989px;top:587px;line-height:16px;font-size:13px;font-weight:bold;color:#d0121b">07,06,01,03,...</div>
<div class="a" style="left:1077px;top:587px;line-height:16px;font-size:13px;font-weight:bold;color:#222">详情</div>
<div class="a" style="left:1107px;top:587px;line-height:16px;font-size:13px;font-weight:bold;color:#3c7cc8">22:26:00</div>
<div class="a" style="left:906px;top:611px;width:254px;height:36px;border-bottom:1px dashed #e3e3e3"></div>
<div class="a" style="left:906px;top:622px;line-height:16px;font-size:12.3px;color:#333">20240830672</div>
<div class="a" style="left:989px;top:622px;line-height:16px;font-size:13px;font-weight:bold;color:#d0121b">02,06,03,01,...</div>
<div class="a" style="left:1077px;top:622px;line-height:16px;font-size:13px;font-weight:bold;color:#222">详情</div>
<div class="a" style="left:1107px;top:622px;line-height:16px;font-size:13px;font-weight:bold;color:#3c7cc8">22:24:00</div>
<div class="a" style="left:983px;top:296px;width:1px;height:350px;border-left:1px dashed #e3e3e3"></div>
<div class="a" style="left:1102px;top:296px;width:1px;height:350px;border-left:1px dashed #e3e3e3"></div>
<div class="a" style="left:916px;top:658px;width:60px;height:26px;background:#45546a;border-radius:3px;color:#fff;font-size:12px;line-height:26px;text-align:center">中奖信息</div>
<div class="a" style="left:906px;top:686px;width:254px;height:32px;background:#f0f2f5;border-bottom:1px solid #ddd;text-align:center;line-height:30px;color:#555;font-size:12px">中奖信息实时更新</div>
<div class="a" style="left:906px;top:718px;width:254px;height:54px;border-bottom:1px dashed #ddd"></div>
<svg class="a" style="left:921px;top:728px" width="36" height="36" viewBox="0 0 36 36"><defs><clipPath id="c0"><circle cx="18" cy="18" r="18"/></clipPath></defs><g clip-path="url(#c0)"><rect width="36" height="36" fill="#d9c3bb"/><path d="M0 0 H30 L28 12 Q20 4 14 10 L10 36 H0Z" fill="#4a2c22"/><ellipse cx="21" cy="18" rx="8" ry="11" fill="#e9cfc4"/><path d="M15 14 h4 M23 14 h4" stroke="#5a3a30" stroke-width="1.2"/><path d="M19 24 h5" stroke="#b36a6a" stroke-width="1.6"/><path d="M28 22 L36 20 V36 H26Z" fill="#6b5a55"/></g></svg>
<div class="a" style="left:967px;top:728px;line-height:17px;color:#555">账号昵称: 9**F<br>中奖金额: <span style="color:#f00">53</span></div>
<div class="a" style="left:906px;top:772px;width:254px;height:54px;border-bottom:1px dashed #ddd"></div>
<svg class="a" style="left:921px;top:782px" width="36" height="36" viewBox="0 0 36 36"><defs><clipPath id="c1"><circle cx="18" cy="18" r="18"/></clipPath></defs><g clip-path="url(#c1)"><rect width="36" height="36" fill="#c9c6b8"/><ellipse cx="18" cy="16" rx="13" ry="15" fill="#2a2220"/><ellipse cx="18" cy="18" rx="8" ry="10" fill="#c9a28c"/><path d="M13 15 h4 M20 15 h4" stroke="#3a2a25" stroke-width="1.2"/><path d="M16 23 h4" stroke="#8a5050" stroke-width="1.4"/><path d="M4 36 Q18 26 32 36Z" fill="#1e1a18"/></g></svg>
<div class="a" style="left:967px;top:782px;line-height:17px;color:#555">账号昵称: g**w<br>中奖金额: <span style="color:#f00">576</span></div>
<div class="a" style="left:906px;top:826px;width:254px;height:54px;border-bottom:1px dashed #ddd"></div>
<svg class="a" style="left:921px;top:836px" width="36" height="36" viewBox="0 0 36 36"><defs><clipPath id="c2"><circle cx="18" cy="18" r="18"/></clipPath></defs><g clip-path="url(#c2)"><rect width="36" height="36" fill="#f2e6e6"/><path d="M10 4 Q22 -2 32 8 L34 30 H24 L26 10Z" fill="#161212"/><ellipse cx="17" cy="19" rx="9" ry="11" fill="#efd6cf"/><path d="M11 17 h4 M19 17 h4" stroke="#3a2a25" stroke-width="1.2"/><path d="M15 25 h4" stroke="#c06a70" stroke-width="1.5"/><path d="M0 36 L6 30 Q18 34 30 28 L36 36Z" fill="#e05a78"/><rect x="31" y="8" width="5" height="20" fill="#8a1a28"/></g></svg>
<div class="a" style="left:967px;top:836px;line-height:17px;color:#555">账号昵称: 2**f7q<br>中奖金额: <span style="color:#f00">18</span></div>
<div class="a" style="left:906px;top:880px;width:254px;height:54px;border-bottom:1px dashed #ddd"></div>
<svg class="a" style="left:921px;top:890px" width="36" height="36" viewBox="0 0 36 36"><defs><clipPath id="c3"><circle cx="18" cy="18" r="18"/></clipPath></defs><g clip-path="url(#c3)"><rect width="36" height="36" fill="#d8d0cc"/><rect x="4" y="0" width="7" height="18" fill="#4b5a8a"/><ellipse cx="24" cy="12" rx="10" ry="11" fill="#5a3a30"/><ellipse cx="22" cy="13" rx="6" ry="7" fill="#e2c0b4"/><path d="M6 22 Q18 14 30 24 L36 36 H0Z" fill="#d7b9aa"/><path d="M10 30 Q16 22 22 30 Q26 36 30 28 L34 36 H8Z" fill="#1a1414"/><path d="M12 18 L26 30 M26 18 L14 30" stroke="#222" stroke-width="1.5"/></g></svg>
<div class="a" style="left:967px;top:890px;line-height:17px;color:#555">账号昵称: U**BDY<br>中奖金额: <span style="color:#f00">92</span></div>
<div class="a" style="left:162px;top:150px;width:380px;height:580px;background:#fff;border-radius:8px;box-shadow:5px 3px 14px rgba(0,0,0,.2)"></div>
<div class="a" style="left:162px;top:246px;width:380px;height:1px;background:#e4e8e8"></div>
<div class="a" style="left:162px;top:177px;width:88px;text-align:center;font-size:15px;line-height:20px;color:#888">快三</div>
<div class="btn" style="left:262px;top:172px">澳门快3</div>
<div class="btn" style="left:352px;top:172px">幸运快3</div>
<div class="btn" style="left:442px;top:172px">二分快3</div>
<div class="btn" style="left:262px;top:205px">三分快3</div>
<div class="btn" style="left:352px;top:205px">五分快3</div>
<div class="a" style="left:162px;top:366px;width:380px;height:1px;background:#e4e8e8"></div>
<div class="a" style="left:162px;top:264px;width:88px;text-align:center;font-size:15px;line-height:20px;color:#888">时时彩</div>
<div class="btn" style="left:262px;top:259px">分分彩</div>
<div class="btn" style="left:352px;top:259px">二分彩</div>
<div class="btn" style="left:442px;top:259px">五分彩</div>
<div class="btn" style="left:262px;top:292px">腾讯分分彩</div>
<div class="btn" style="left:352px;top:292px">幸运时时彩</div>
<div class="btn" style="left:442px;top:292px">极速时时彩</div>
<div class="btn" style="left:262px;top:325px">SG时时彩</div>
<div class="btn" style="left:352px;top:325px">澳洲幸运5</div>
<div class="a" style="left:162px;top:486px;width:380px;height:1px;background:#e4e8e8"></div>
<div class="a" style="left:162px;top:384px;width:88px;text-align:center;font-size:15px;line-height:20px;color:#888">快乐彩</div>
<div class="btn" style="left:262px;top:379px">台湾赛车</div>
<div class="btn" style="left:352px;top:379px">二分快乐8</div>
<div class="btn" style="left:442px;top:379px">幸运飞艇</div>
<div class="btn" style="left:262px;top:412px">极速飞艇</div>
<div class="btn" style="left:352px;top:412px">分分赛车</div>
<div class="btn" style="left:442px;top:412px">二分赛车</div>
<div class="btn" style="left:262px;top:445px">三分赛车</div>
<div class="btn" style="left:352px;top:445px">澳洲幸运10</div>
<div class="btn" style="left:442px;top:445px">SG飞艇</div>
<div class="a" style="left:162px;top:573px;width:380px;height:1px;background:#e4e8e8"></div>
<div class="a" style="left:162px;top:504px;width:88px;text-align:center;font-size:15px;line-height:20px;color:#888">十一选五</div>
<div class="btn" style="left:262px;top:499px">澳门11选5</div>
<div class="btn" style="left:352px;top:499px">一分11选5</div>
<div class="btn" style="left:442px;top:499px">二分11选5</div>
<div class="btn" style="left:262px;top:532px">印尼11选5</div>
<div class="a" style="left:162px;top:632px;width:380px;height:1px;background:#e4e8e8"></div>
<div class="a" style="left:162px;top:591px;width:88px;text-align:center;font-size:15px;line-height:20px;color:#888">六合彩</div>
<div class="btn" style="left:262px;top:586px">香港六合彩</div>
<div class="btn" style="left:352px;top:586px">幸运六合彩</div>
<div class="a" style="left:162px;top:719px;width:380px;height:1px;background:#e4e8e8"></div>
<div class="a" style="left:162px;top:650px;width:88px;text-align:center;font-size:15px;line-height:20px;color:#888">低频彩</div>
<div class="btn" style="left:262px;top:645px">福彩3D</div>
<div class="btn" style="left:352px;top:645px">排列三</div>
<div class="btn" style="left:442px;top:645px">极速3D</div>
<div class="btn" style="left:262px;top:678px">极速排列3</div>
<div class="a" style="left:123px;top:295px;width:39px;height:110px;background:#000"></div>
<div class="a" style="left:133px;top:307px;width:20px;height:20px;border-radius:50%;border:3px solid #c8c8c8;color:#ddd;font-size:10px;line-height:14px;text-align:center">8</div>
<div class="a" style="left:123px;top:333px;width:39px;text-align:center;color:#ddd;font-size:13px;line-height:16px;white-space:normal">更<br>多<br>彩<br>种</div>
<div class="a" style="left:-10px;top:736px;width:36px;height:196px;background:#bbb"></div>
<div class="a" style="left:-10px;top:744px;width:28px;height:180px;background:#fff"></div>
<div class="a" style="left:-10px;top:744px;width:28px;height:26px;background:#e4393c"></div>
<svg class="a" style="left:-6px;top:749px" width="13" height="13" viewBox="0 0 13 13"><path d="M1 1 L11 11 M11 1 L1 11" stroke="#fff" stroke-width="2"/></svg>
<div class="a" style="left:-7px;top:793px;font-size:13px;line-height:17.7px;color:#333;white-space:normal;width:20px">キ<br>直<br>不<br>目<br>高</div>
<div class="a" style="left:0;top:932px;width:1253px;height:1px;background:#e6ebf2"></div>
<div class="a" style="left:285px;top:932px;width:69px;height:1px;background:#f0a060"></div>
<div class="a" style="left:358px;top:932px;width:68px;height:1px;background:#f0a060"></div>
<div class="a" style="left:430px;top:932px;width:69px;height:1px;background:#f0a060"></div>
</body></html>
